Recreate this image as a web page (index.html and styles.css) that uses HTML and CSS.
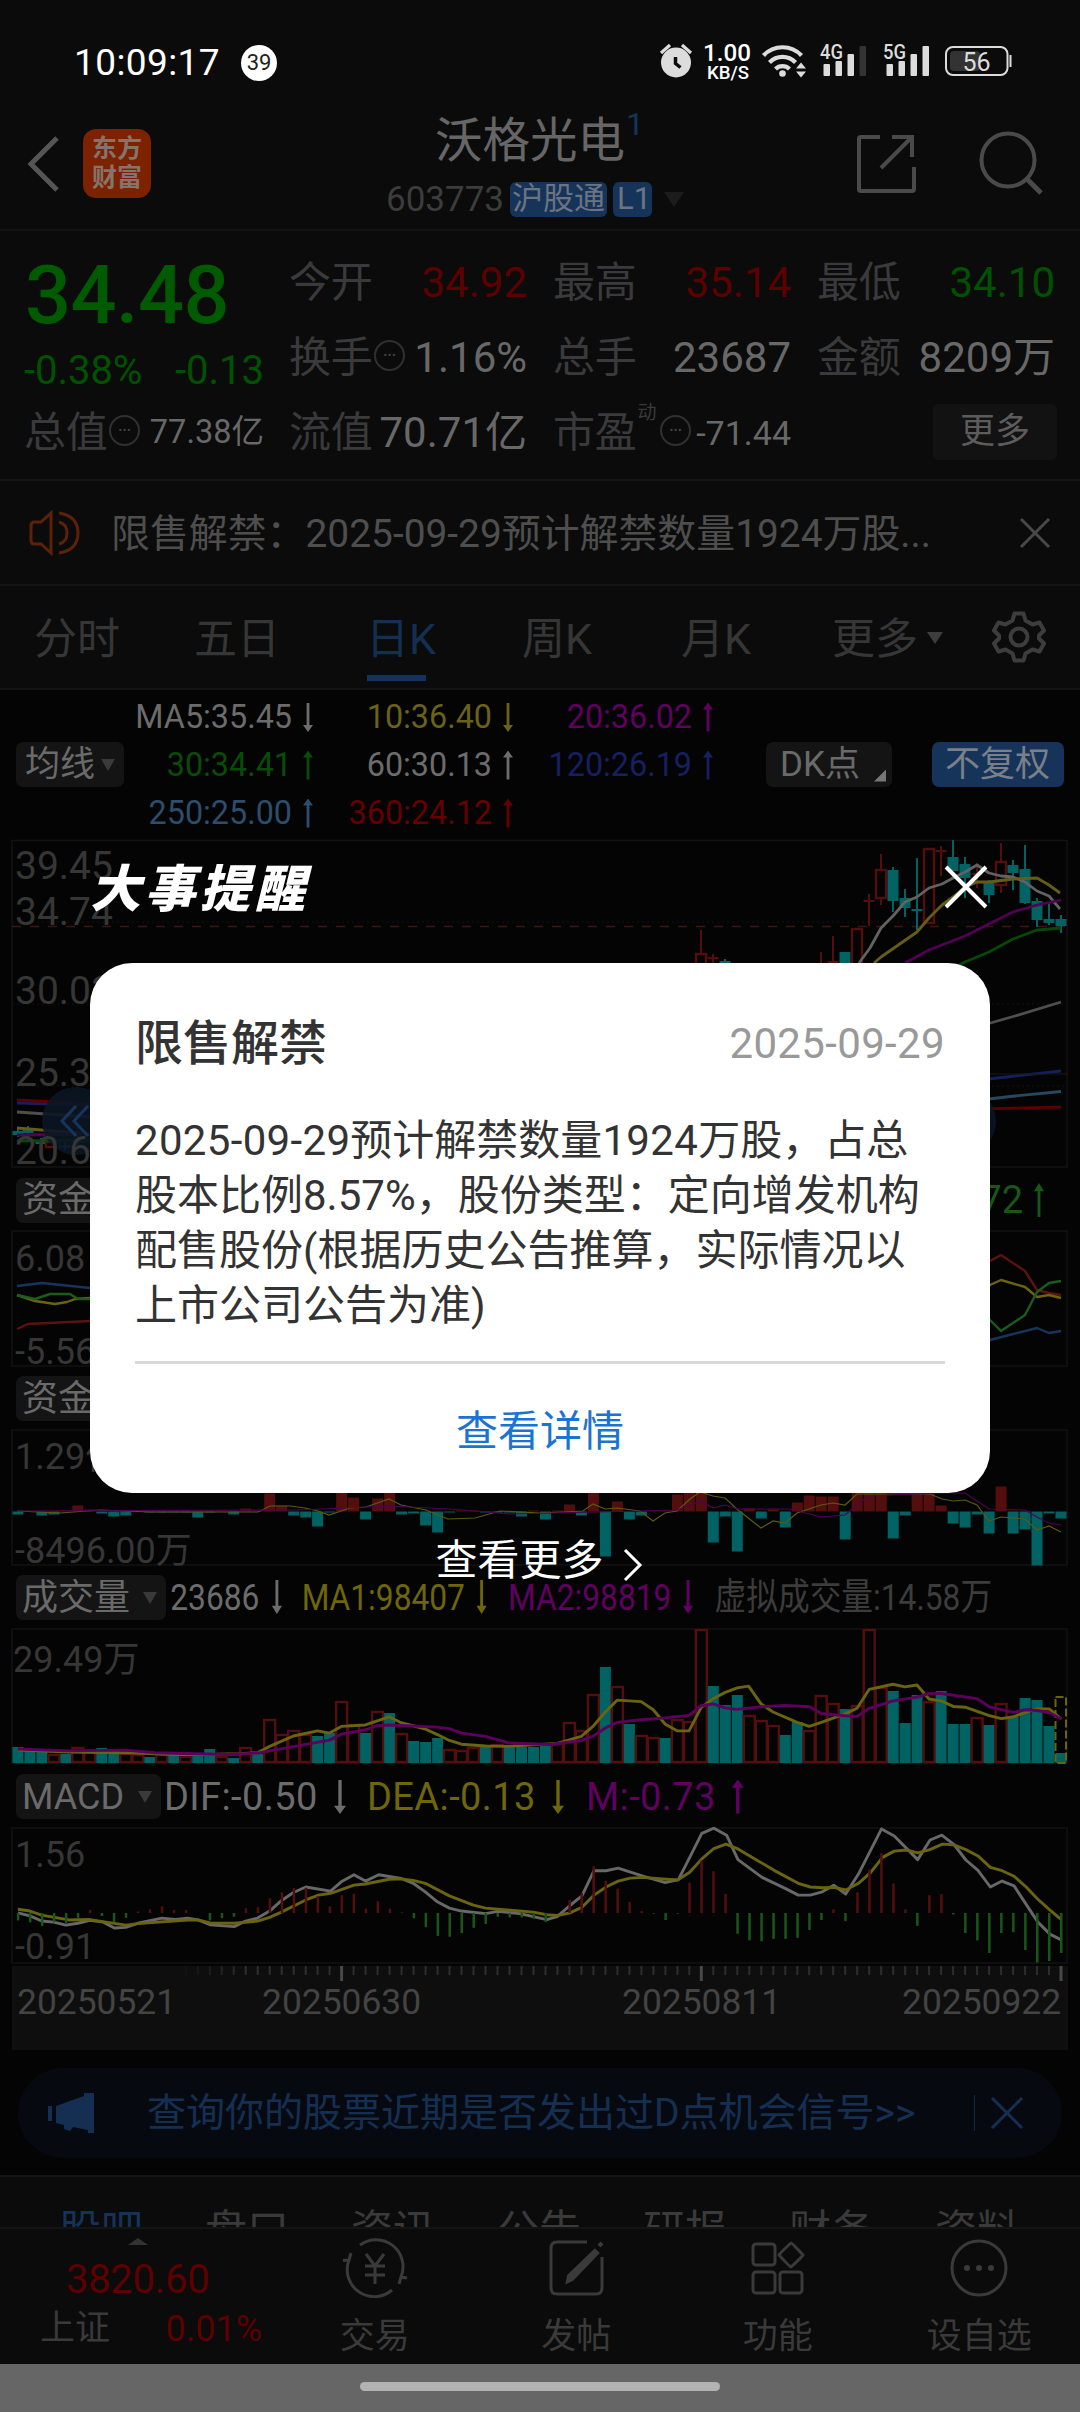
FILE: index.html
```html
<!DOCTYPE html>
<html lang="zh-CN">
<head>
<meta charset="utf-8">
<title>沃格光电 603773</title>
<link rel="stylesheet" href="styles.css">
</head>
<body>
<div class="screen">
  <header class="status">
    <span class="clock">10:09:17</span><span class="count">39</span>
    <svg class="status-icons" width="370" height="60" viewBox="650 34 370 60">
      <g fill="#dcdcdc">
        <circle cx="676" cy="63.500" r="15"/>
        <path d="M661 54l9-8M682 46l9 8" stroke="#dcdcdc" stroke-width="3.200"/>
        <path d="M675.500 58v6.500l5 4" stroke="#0b0b0b" stroke-width="3.500" fill="none"/>
      </g>
      <text x="703" y="62" class="st-speed" textLength="48" lengthAdjust="spacingAndGlyphs">1.00</text>
      <text x="707" y="79.500" class="st-unit" textLength="42" lengthAdjust="spacingAndGlyphs">KB/S</text>
      <g fill="none" stroke="#dcdcdc" stroke-width="4.200">
        <path d="M763.500 56.500a26 26 0 0 1 38 0"/><path d="M769.500 63.500a18 18 0 0 1 26 0"/><path d="M775.500 70a10 10 0 0 1 14 0"/>
      </g>
      <circle cx="782.500" cy="74.500" r="3.300" fill="#dcdcdc"/>
      <path d="M796 69.500l5-6 5 6zM796 72.500l5 6 5-6z" fill="#dcdcdc"/>
      <text x="820" y="60" class="st-net" textLength="23" lengthAdjust="spacingAndGlyphs">4G</text>
      <g fill="#dcdcdc"><rect x="823.500" y="65" width="6.500" height="12" rx="1"/><rect x="835.500" y="62" width="6.500" height="15" rx="1"/><rect x="847.500" y="55" width="6.500" height="22" rx="1"/><rect x="859.500" y="47" width="6.500" height="30" rx="1" fill="#333"/></g>
      <text x="883" y="60" class="st-net" textLength="23" lengthAdjust="spacingAndGlyphs">5G</text>
      <g fill="#dcdcdc"><rect x="886.500" y="65" width="6.500" height="12" rx="1"/><rect x="898.500" y="62" width="6.500" height="15" rx="1"/><rect x="910.500" y="55" width="6.500" height="22" rx="1"/><rect x="922.500" y="47" width="6.500" height="30" rx="1"/></g>
      <rect x="946" y="48" width="61.500" height="28" rx="7" fill="none" stroke="#dcdcdc" stroke-width="2"/>
      <rect x="950" y="52" width="30" height="20" rx="4" fill="#333"/>
      <rect x="1009.500" y="56" width="2" height="12" fill="#dcdcdc"/>
      <text x="962.500" y="71.500" class="st-batt" textLength="28">56</text>
    </svg>
  </header>

  <div class="head">
    <svg class="back" width="36" height="60" viewBox="0 0 36 60"><path d="M32 4L6 30l26 26" fill="none" stroke="#555" stroke-width="5"/></svg>
    <div class="logo">东方<br>财富</div>
    <div class="stock">
      <div class="name">沃格光电<sup>1</sup></div>
      <div class="code">603773<b>沪股通</b><b>L1</b><i></i></div>
    </div>
    <svg class="head-icons" width="200" height="70" viewBox="850 130 200 70" fill="none" stroke="#4a4a4a" stroke-width="4">
      <path d="M881 137H862q-2 0-2 2v50q0 2 2 2h51q2 0 2-2v-22M893 137h20v20M913 137L882 168"/>
      <circle cx="1009" cy="160" r="26.500"/><path d="M1028 179l14 14" stroke-width="5"/>
    </svg>
  </div>

  <section class="quote">
    <div class="q-col first">
      <div class="price">34.48</div>
      <div class="chg"><span>-0.38%</span><span>-0.13</span></div>
      <div class="row"><label>总值</label><i class="dots">•••</i><span class="s33">77.38亿</span></div>
    </div>
    <div class="q-col">
      <div class="row"><label>今开</label><span class="up">34.92</span></div>
      <div class="row"><label>换手</label><i class="dots">•••</i><span>1.16%</span></div>
      <div class="row"><label>流值</label><span>70.71亿</span></div>
    </div>
    <div class="q-col">
      <div class="row"><label>最高</label><span class="up">35.14</span></div>
      <div class="row"><label>总手</label><span>23687</span></div>
      <div class="row"><label>市盈</label><em>动</em><i class="dots">•••</i><span class="s34">-71.44</span></div>
    </div>
    <div class="q-col">
      <div class="row"><label>最低</label><span class="down">34.10</span></div>
      <div class="row"><label>金额</label><span>8209万</span></div>
      <div class="row"><button class="more">更多</button></div>
    </div>
  </section>

  <div class="notice">
    <svg width="52" height="46" viewBox="0 0 52 46" fill="none" stroke="#5c2208" stroke-width="3"><path d="M22 3v40L12 34H5q-3 0-3-4V16q0-4 3-4h7z"/><path d="M30 12q8 2 8 11t-8 11M30 3q19 3 19 20T30 43"/></svg>
    <span>限售解禁：2025-09-29预计解禁数量1924万股...</span>
    <svg width="32" height="32" viewBox="0 0 32 32" stroke="#484848" stroke-width="3"><path d="M2 2l28 28M30 2L2 30"/></svg>
  </div>

  <nav class="tabs">
    <span>分时</span><span>五日</span><span class="on">日K</span><span>周K</span><span>月K</span><span>更多<i></i></span>
    <svg width="54" height="54" viewBox="-27 -27 54 54" fill="none" stroke="#3d3d3d" stroke-width="4" stroke-linejoin="round"><path d="M-4.500-23.500h9l2 7 7 4 7-2 4.500 8-5 5v3l5 5-4.500 8-7-2-7 4-2 7h-9l-2-7-7-4-7 2-4.500-8 5-5v-3l-5-5 4.500-8 7 2 7-4z"/><circle r="8.500"/></svg>
  </nav>

  <section class="ma">
    <div class="chip ma-chip">均线<i></i></div>
    <div class="ma-grid">
      <span class="c-w">MA5:35.45<u class="ar dn"></u></span><span class="c-y">10:36.40<u class="ar dn"></u></span><span class="c-m">20:36.02<u class="ar"></u></span>
      <span class="c-g">30:34.41<u class="ar"></u></span><span class="c-w">60:30.13<u class="ar"></u></span><span class="c-b">120:26.19<u class="ar"></u></span>
      <span class="c-l">250:25.00<u class="ar"></u></span><span class="c-r">360:24.12<u class="ar"></u></span>
    </div>
    <div class="chip dk">DK点<i></i></div>
    <div class="chip fq">不复权</div>
  </section>

  <section class="charts">
    <svg class="c-main" width="1080" height="330" viewBox="0 839 1080 330">
      <path class="frame" d="M12 840.500H1067V1167H12z"/>
      <path class="grid" d="M12 922H1067M12 1004H1067M12 1086H1067"/>
      <g class="axis big"><text x="15" y="878.500">39.45</text><text x="15" y="924.500">34.74</text><text x="15" y="1004">30.03</text><text x="15" y="1086">25.31</text></g>
      <path d="M12 926.500H1067" stroke="#42140f" stroke-width="1.500" stroke-dasharray="9 9"/>
      <g id="candles"></g>
      <g class="line">
        <path stroke="#626262" d="M859 963l11-15 11-20 12-12 12-14 12-5 12-9 13-4 11-6 12-6 12-7 12 8 12 3 12 1 12 5 12 9 12 5 11 13"/>
        <path stroke="#665c1a" d="M874 963l7-6 36-25 12-14 13-13 11-8 12-10 12-5h12l24-3 24-1 12 7 11 8"/>
        <path stroke="#520052" d="M905 963l24-13 36-14 24-12 24-12 24-7 24-5"/>
        <path stroke="#064806" d="M955 967l10-5 24-10 24-13 24-9 24-2"/>
        <path stroke="#4e4e4e" d="M17 1112L90 1117M980 1026l35-10 46-14"/>
        <path stroke="#14205c" d="M17 1103l73 2M980 1080l35-4 46-5"/>
        <path stroke="#27495f" d="M980 1100l35-4 46-4.500"/>
        <path stroke="#5c0000" d="M17 1100l73 4M980 1109l81-2"/>
        <path stroke="#665c1a" d="M17 1128l73 6"/><path stroke="#520052" d="M17 1135l73-1"/><path stroke="#064806" d="M17 1141l73-1"/>
      </g>
      <path d="M990 1074h77" stroke="#191919"/>
      <g opacity=".9"><circle cx="76" cy="1121" r="34" fill="#0b1624"/><circle cx="962" cy="1121" r="34" fill="#0b1624"/></g>
      <path d="M76 1106l-14 15 14 15M88 1106l-14 15 14 15" fill="none" stroke="#17355c" stroke-width="3"/>
      <text class="axis big" x="15" y="1164">20.60</text>
    </svg>
    <div class="strip"><div class="chip">资金<i></i></div><span class="fund">72<u class="ar"></u></span></div>
    <svg width="1080" height="137" viewBox="0 1230 1080 137">
      <path class="frame" d="M12 1231H1067V1366H12z"/>
      <g class="axis"><text x="15" y="1271">6.08</text><text x="15" y="1364">-5.56</text></g>
      <g class="line thin">
        <path stroke="#17355c" d="M17 1286l25-3 48 5M980 1342l10-2 47-12 12 5 12-2"/>
        <path stroke="#5c1212" d="M17 1329l11-5 62-3M980 1266l10-5 11-6 24 16 12 19 12 3 12 2"/>
        <path stroke="#6a6410" d="M17 1295l18 6 20 3 12-2 8-3 15-1M980 1290l10-5 11-5 24 7 12 10 12-2 12 3"/>
        <path stroke="#1c5c1a" d="M17 1295l18 4 15-5h20l8 5h12M980 1310l10 10 11 11 24-16 12-23 12-9 12-2"/>
      </g>
    </svg>
    <div class="strip"><div class="chip">资金<i></i></div></div>
    <svg width="1080" height="137" viewBox="0 1429 1080 137">
      <path class="frame" d="M12 1430H1067V1565H12z"/>
      <g class="axis"><text x="15" y="1469">1.29亿</text><text x="15" y="1562.500">-8496.00万</text></g>
      <g id="flow"></g>
      <g fill="none" stroke-width="1.200">
        <polyline stroke="#5c5a10" points="17,1511 60,1513 100,1510 150,1512 258,1512 270,1506 290,1506 305,1508 318,1511 329,1515 350,1508 366,1507 389,1499 401,1505 426,1510 448,1519 475,1518 500,1511 540,1513 583,1511 593,1504 605,1509 617,1508 640,1511 653,1521 665,1513 677,1511 690,1499 700,1492 713,1496 725,1498 738,1510 761,1528 773,1521 785,1523 797,1513 821,1505 833,1503 845,1505 857,1494 930,1494 942,1499 953,1501 965,1500 977,1505 989,1521 1001,1517 1025,1519 1037,1530 1049,1526 1061,1532"/>
        <polyline stroke="#520052" points="17,1511 300,1510 389,1506 450,1509 510,1514 640,1511 677,1510 701,1501 713,1508 725,1505 738,1509 790,1509 821,1517 845,1515 857,1505 869,1496 940,1493 965,1493 977,1501 989,1509 1025,1510 1037,1517 1049,1523 1061,1525"/>
      </g>
    </svg>
    <div class="strip"><div class="chip wide">成交量<i></i></div>
      <div class="vals narrow"><span class="c-w">23686<u class="ar dn"></u></span><span class="c-y2">MA1:98407<u class="ar dn"></u></span><span class="c-m">MA2:98819<u class="ar dn"></u></span><span class="c-d">虚拟成交量:14.58万</span></div></div>
    <svg width="1080" height="137" viewBox="0 1628 1080 137">
      <path class="frame" d="M12 1629H1067V1763.500H12z"/>
      <g class="axis"><text x="13" y="1672">29.49万</text></g>
      <g id="volume"></g>
      <g class="line scaled" transform="translate(0 1480) scale(.34435 .37)">
        <polyline stroke="#6a6410" points="52,730 200,735 400,738 500,742 590,742 700,740 748,737 783,720 852,692 922,678 957,684 991,666 1061,662 1130,640 1165,656 1235,673 1270,688 1305,704 1340,714 1410,719 1480,720 1548,716 1618,712 1688,693 1723,665 1757,628 1792,595 1862,599 1897,621 1932,660 1966,678 2001,678 2036,615 2071,591 2106,574 2141,562 2174,557 2210,605 2245,627 2315,655 2350,666 2385,655 2454,632 2489,617 2524,566 2593,552 2628,559 2663,554 2698,592 2733,597 2768,612 2803,614 2873,637 2908,645 2943,640 2978,628 3013,618 3048,619 3082,646"/>
        <polyline stroke="#5c005c" points="52,727 200,732 365,730 450,737 660,742 748,738 783,732 957,703 991,687 1061,675 1095,664 1130,662 1270,668 1305,672 1340,684 1410,693 1480,711 1600,715 1688,704 1723,692 1757,671 1792,655 1862,648 1932,643 2001,636 2036,610 2071,605 2106,616 2141,620 2210,613 2280,609 2350,613 2385,631 2454,637 2489,639 2524,617 2593,597 2663,587 2698,577 2733,577 2838,591 2873,613 2943,628 2978,621 3013,623 3048,629 3082,646"/>
      </g>
    </svg>
    <div class="strip"><div class="chip macd">MACD<i></i></div>
      <div class="vals wide-vals"><span class="c-w">DIF:-0.50<u class="ar dn"></u></span><span class="c-y2">DEA:-0.13<u class="ar dn"></u></span><span class="c-m">M:-0.73<u class="ar"></u></span></div></div>
    <svg width="1080" height="137" viewBox="0 1827 1080 137">
      <path class="frame" d="M12 1828H1067V1963H12z"/>
      <g class="axis"><text x="15" y="1866.500">1.56</text><text x="15" y="1958.500">-0.91</text></g>
      <g class="line scaled" transform="translate(0 1480) scale(.34435 .37)">
        <polyline stroke="#686868" points="52,1170 87,1178 121,1192 156,1195 191,1203 226,1198 261,1190 300,1195 332,1211 365,1209 400,1198 470,1184 510,1188 545,1184 575,1189 610,1202 680,1207 713,1192 748,1184 783,1165 817,1137 852,1115 888,1100 960,1111 991,1086 1028,1067 1061,1084 1100,1067 1165,1077 1200,1090 1235,1113 1270,1140 1305,1157 1340,1165 1410,1172 1445,1166 1510,1172 1568,1184 1588,1188 1618,1180 1655,1150 1690,1124 1725,1056 1760,1056 1795,1049 1865,1070 1932,1088 1970,1080 2003,1020 2038,955 2073,941 2110,960 2143,1026 2213,1074 2283,1105 2318,1122 2353,1122 2388,1113 2421,1095 2456,1119 2493,1065 2560,943 2597,962 2665,1026 2701,973 2735,960 2770,985 2805,1027 2840,1055 2876,1100 2910,1084 2945,1097 2980,1147 3014,1195 3050,1228 3082,1243"/>
        <polyline stroke="#6a6410" points="52,1160 87,1165 121,1176 200,1189 261,1188 365,1203 400,1199 545,1189 575,1189 610,1197 680,1198 748,1192 783,1182 817,1168 888,1135 925,1122 960,1117 1028,1095 1061,1092 1130,1079 1165,1078 1200,1082 1235,1090 1305,1124 1375,1149 1410,1157 1548,1168 1588,1175 1618,1177 1655,1170 1690,1155 1725,1122 1760,1100 1795,1084 1830,1076 1865,1074 1935,1079 1968,1081 2003,1060 2038,1024 2073,996 2108,984 2143,997 2248,1055 2318,1090 2353,1100 2388,1102 2421,1101 2456,1108 2493,1090 2528,1061 2563,1020 2597,1003 2632,1000 2665,1008 2700,999 2737,984 2770,986 2805,999 2840,1016 2876,1047 2910,1056 2945,1071 2980,1100 3014,1133 3050,1163 3082,1188"/>
      </g>
      <g id="macd"></g>
    </svg>
    <svg class="timeline" width="1080" height="86" viewBox="0 1964 1080 86">
      <rect x="12" y="1966" width="1056" height="84" fill="#0e0e0e"/>
      <g id="ticks"></g>
      <g class="dates"><text x="17" y="2013.500">20250521</text><text x="262" y="2013.500">20250630</text><text x="622" y="2013.500">20250811</text><text x="902" y="2013.500">20250922</text></g>
    </svg>
  </section>

  <div class="banner">
    <svg width="46" height="40" viewBox="0 0 46 40" fill="#152f52"><path d="M0 13h4v15H0zM8 13L36 3V0h10v40h-6v-3l-15-3-3 4-6-2v-4l-8-2zM40 0h6v40h-6z"/></svg>
    <span>查询你的股票近期是否发出过D点机会信号&gt;&gt;</span>
    <i></i>
    <svg width="34" height="34" viewBox="0 0 34 34" stroke="#152f52" stroke-width="3"><path d="M2 2l30 30M32 2L2 32"/></svg>
  </div>

  <nav class="subtabs"><span class="on">股吧</span><span>盘口</span><span>资讯</span><span>公告</span><span>研报</span><span>财务</span><span>资料</span></nav>

  <footer class="bottom">
    <div class="index"><i></i><strong>3820.60</strong><div><span>上证</span><b>0.01%</b></div></div>
    <div class="item"><svg width="66" height="60" viewBox="-33 -30 66 60" fill="none" stroke="#3a3a3a" stroke-width="3"><path d="M-15-23A27 27 0 0 1 26 9L32 10M26 9L24 16M17 22A27 27 0 0 1-26-8L-32-7.500M-26-8L-24-15"/><path d="M-9-14L0-2 9-14M0-2V16M-10-2h20M-10 7h20"/></svg><span>交易</span></div>
    <div class="item"><svg width="60" height="60" viewBox="-30 -30 60 60" fill="none" stroke="#3a3a3a" stroke-width="3"><path d="M11-26H-19q-6 0-6 6V20q0 6 6 6H20q6 0 6-6V-11"/><path d="M19-17L-7 8l-1 5 4-2L21-15zM23-22l3-3" stroke-width="4" fill="#3a3a3a"/></svg><span>发帖</span></div>
    <div class="item"><svg width="60" height="60" viewBox="-30 -30 60 60" fill="none" stroke="#3a3a3a" stroke-width="3"><rect x="-25" y="-24" width="22" height="21" rx="3"/><rect x="-25" y="4" width="22" height="21" rx="3"/><rect x="2" y="4" width="22" height="21" rx="3"/><path d="M13-25q1 0 12 12q-1 2-12 12q-1 0-12-12q1-2 12-12z" stroke-linejoin="round"/></svg><span>功能</span></div>
    <div class="item"><svg width="60" height="60" viewBox="-30 -30 60 60"><circle r="27" fill="none" stroke="#3a3a3a" stroke-width="3"/><g fill="#3a3a3a"><circle cx="-12" r="3"/><circle r="3"/><circle cx="12" r="3"/></g></svg><span>设自选</span></div>
  </footer>
  <div class="gesture"><i></i></div>

  <div class="modal">
    <div class="modal-head"><h1>大事提醒</h1><svg width="44" height="44" viewBox="0 0 44 44" stroke="#fff" stroke-width="4"><path d="M2 2l40 40M42 2L2 42"/></svg></div>
    <div class="card">
      <div class="card-head"><h2>限售解禁</h2><time>2025-09-29</time></div>
      <p><span class="num">2025-09-29</span>预计解禁数量<span class="num">1924</span>万股，占总<br>股本比例8.57%，股份类型：定向增发机构<br>配售股份(根据历史公告推算，实际情况以<br>上市公司公告为准)</p>
      <a class="detail">查看详情</a>
    </div>
    <div class="see-more">查看更多<svg width="20" height="34" viewBox="0 0 20 34" fill="none" stroke="#fff" stroke-width="3"><path d="M2 2l15 15L2 32"/></svg></div>
  </div>
</div>
<script src="charts.js"></script>
</body>
</html>
```
FILE: styles.css
```css
* { box-sizing: border-box; }
body { margin: 0; background: #040404; font-family: Roboto, "Noto Sans CJK SC", sans-serif; color: #666; }
i, em { font-style: normal; }
svg { display: block; flex: none; }
.screen { position: relative; width: 1080px; height: 2412px; overflow: hidden; line-height: 1; display: flex; flex-direction: column; }
.screen > * { flex: none; }

.status { height: 104px; background: #0b0b0b; display: flex; align-items: center; padding: 21px 60px 0 74px; color: #fff; }
.clock { font-size: 37px; letter-spacing: .4px; width: 167px; }
.count { width: 36px; height: 36px; border-radius: 50%; background: #fff; color: #222; font-size: 22px; display: flex; align-items: center; justify-content: center; }
.status-icons { margin-left: auto; margin-top: 1px; }
.st-speed { font-size: 24px; font-weight: 500; fill: #fff; }
.st-unit { font-size: 19px; font-weight: 500; fill: #fff; }
.st-net { font-size: 20px; font-weight: 500; fill: #dcdcdc; }
.st-batt { font-size: 25px; fill: #dcdcdc; }

.head { height: 127px; background: #0b0b0b; border-bottom: 2px solid #141414; display: flex; padding: 0 31px 0 25px; }
.back { margin: 30px 22px 0 0; }
.logo { width: 68px; height: 69px; margin-top: 25px; border-radius: 13px; background: #7c2200; color: #85736c; font-size: 25px; line-height: 29px; font-weight: 700; text-align: center; padding-top: 5px; }
.stock { flex: 1; padding: 10px 0 0 284px; }
.name { font-size: 47.500px; line-height: 54px; width: 220px; display: flex; }
.name sup { font-size: 32px; line-height: 32px; color: #14345c; margin: -6px 0 0 1px; }
.code { display: flex; align-items: center; font-size: 35px; color: #3c3c3c; height: 36px; margin: 13px 0 0 -49px; width: 310px; }
.code b { font-weight: 400; font-size: 31px; background: #16335a; color: #6b7480; height: 35px; line-height: 34px; border-radius: 6px; padding: 0 2px; margin-left: 6px; }
.code b + b { padding: 0 4px; width: 39px; }
.code i { border: 10px solid transparent; border-top: 15px solid #1c1c1c; border-bottom: 0; margin-left: 12px; }
.head-icons { margin: 26px 0 0; }

.quote { height: 250px; background: #0b0b0b; border-bottom: 2px solid #141414; display: flex; gap: 26px; padding: 14px 24px 0 24px; font-size: 42px; }
.q-col { width: 238px; }
.q-col:not(.first) { position: relative; left: -1px; }
.q-col.first { width: 240px; }
.row { display: flex; align-items: center; height: 75px; white-space: nowrap; }
.row label { color: #3a3a3c; letter-spacing: -.3px; }
.row span { margin-left: auto; color: #686868; }
.row .s33 { font-size: 32.500px; }
.row .s34 { font-size: 34px; }
.row .up { color: #5c0000; }
.row .down { color: #005200; }
.row em { font-size: 19px; color: #3a3a3c; margin: -40px 2px 0 1px; }
.dots { width: 31px; height: 31px; border: 2px solid #303030; border-radius: 50%; font-size: 11px; letter-spacing: .5px; color: #424242; display: flex; align-items: center; justify-content: center; margin: -4px 0 0 2px; flex: none; }
.price { font-size: 81px; font-weight: 500; color: #005a00; height: 101px; line-height: 101px; padding-left: 1px; letter-spacing: -.5px; }
.chg { display: flex; justify-content: space-between; font-size: 40px; color: #005200; height: 49px; line-height: 49px; }
.more { margin: 0 -2px 0 auto; width: 124px; height: 56px; border: 0; border-radius: 6px; background: #121212; color: #5c5c5c; font: inherit; font-size: 35px; padding: 0; margin-top: -2px; }

.notice { height: 105px; background: #0b0b0b; border-bottom: 2px solid #141414; display: flex; align-items: center; padding: 0 29px; font-size: 38.900px; color: #4e4e4e; }
.notice span { margin: 3px 0 0 30px; flex: 1; white-space: nowrap; }

.tabs { height: 104px; background: #0b0b0b; border-bottom: 2px solid #141414; display: flex; align-items: center; padding: 0 0 0 34px; font-size: 43px; color: #363636; }
.tabs span { width: 160px; height: 102px; line-height: 106px; white-space: nowrap; }
.tabs span:nth-child(3) { width: 156px; margin-left: 12px; }
.tabs span:nth-child(4) { width: 159px; }
.tabs span:nth-child(5) { width: 151px; }
.tabs .on { color: #152f52; background: linear-gradient(#15335a, #15335a) 1px 89px / 59px 6px no-repeat; }
.tabs i { display: inline-block; border: 8px solid transparent; border-top: 12px solid #3d3d3d; border-bottom: 0; margin: 0 0 10px 9px; }

.ma { height: 149px; display: flex; align-items: center; padding-left: 16px; font-size: 32.300px; }
.chip { height: 45px; border-radius: 7px; background: #141414; color: #6a6a6a; font-size: 36px; line-height: 44px; padding-left: 6px; display: flex; align-items: center; flex: none; white-space: nowrap; width: 150px; }
.chip i { border: 7px solid transparent; border-top: 12px solid #3a3a3a; border-bottom: 0; margin-left: auto; margin-right: 9px; }
.ma-chip { width: 108px; font-size: 35px; padding-left: 9px; }
.ma-grid { display: grid; grid-template-columns: 189px 200px 200px; grid-auto-rows: 48px; width: 590px; align-self: flex-start; padding-top: 3px; }
.ma-grid span { display: flex; align-items: center; justify-content: flex-end; }
.ar { display: block; width: 10px; height: 29px; margin-left: 11px; background: currentColor; clip-path: polygon(50% 0, 100% 24%, 64% 24%, 64% 100%, 36% 100%, 36% 24%, 0 24%); text-decoration: none; flex: none; }
.ar.dn { transform: rotate(180deg); }
.c-w { color: #6c6c6c; } .c-y { color: #6a6218; } .c-y2 { color: #6e6608; } .c-m { color: #600060; } .c-g { color: #084c08; }
.c-b { color: #162060; } .c-l { color: #2c4e6c; } .c-r { color: #660000; } .c-d { color: #3c3c3c; }
.dk { width: 126px; margin-left: 52px; padding-left: 14px; font-size: 35px; }
.dk i { border: 0; width: 12px; height: 12px; background: #777; clip-path: polygon(100% 0, 100% 100%, 0 100%); margin: 22px 6px 0 auto; }
.fq { width: 132px; margin-left: 40px; background: #16335a; color: #7a7f88; font-size: 35px; padding-left: 13px; }

.charts { height: 1211px; }
.strip { height: 62px; display: flex; align-items: center; padding: 1px 0 0 16px; }
.c-main + .strip { height: 61px; }
.strip .chip.macd { width: 145px; }
.fund { margin-left: auto; padding-right: 36px; font-size: 38px; color: #1a5618; display: flex; align-items: center; }
.strip .ar { height: 34px; }
.vals { display: flex; align-items: center; font-size: 38px; white-space: nowrap; padding-left: 3px; }
.vals span { display: flex; align-items: center; width: 203px; }
.vals .ar { margin-left: 16px; width: 12px; }
.vals span:nth-child(2) { width: 219px; }
.wide-vals { letter-spacing: .4px; }
.narrow { font-size: 37.200px; transform: scaleX(.853); transform-origin: 0 50%; padding-left: 5px; }
.narrow span:first-child { width: 154px; }
.narrow span:nth-child(2), .narrow span:nth-child(3) { width: 242px; }
.narrow .ar { width: 12px; margin-left: 14px; }
.frame { fill: none; stroke: #121212; stroke-width: 1.500; }
.grid { stroke: #131313; stroke-dasharray: 2 3; }
.axis { font-size: 36px; fill: #363636; }
.axis.big { font-size: 39px; }
.dates { font-size: 35.400px; fill: #444; }
.line { fill: none; stroke-width: 2.800; stroke-linejoin: round; }
.line.thin { stroke-width: 2.400; }
.scaled polyline { vector-effect: non-scaling-stroke; stroke-width: 2.900; }

.banner { margin: 18px 18px 17px; height: 90px; border-radius: 45px; background: #060a10; display: flex; align-items: center; padding-left: 30px; font-size: 39px; color: #152f52; }
.banner span { margin-left: 53px; width: 827px; white-space: nowrap; }
.banner i { width: 1px; height: 36px; background: #14283f; margin-right: 15px; }

.subtabs { height: 54px; border-top: 2px solid #141414; border-bottom: 2px solid #141414; background: #0b0b0b; overflow: hidden; display: grid; grid-template-columns: repeat(7, 146px); padding: 29px 0 0 28px; text-align: center; font-size: 42px; line-height: 50px; color: #3a3a3a; }
.subtabs .on { color: #15335a; }

.bottom { height: 135px; background: #0b0b0b; display: flex; color: #3a3a3a; font-size: 35px; }
.index { width: 274px; padding-left: 40px; }
.index i { display: block; width: 0; border: 10px solid transparent; border-bottom: 7px solid #333; border-top: 0; margin: 9px 0 0 88px; }
.index strong { display: block; font-weight: 400; font-size: 40px; letter-spacing: -.3px; color: #5c0000; margin: 15px 0 11px 26px; line-height: 40px; }
.index div { display: flex; line-height: 36px; width: 222px; justify-content: space-between; }
.index b { font-weight: 400; color: #5c0000; font-size: 36px; }
.item { width: 201.500px; display: flex; flex-direction: column; align-items: center; padding-top: 9px; }
.item span { margin-top: 21px; }
.gesture { height: 48px; background: #666; display: flex; justify-content: center; padding-top: 18px; }
.gesture i { width: 360px; height: 9px; border-radius: 5px; background: #b3b3b3; }

.modal { position: absolute; left: 90px; top: 860px; width: 900px; color: #333; }
.modal-head { height: 103px; display: flex; justify-content: space-between; padding: 5px 2px 0 0; color: #fff; }
.modal h1 { margin: 0; font-size: 50.500px; line-height: 50px; font-weight: 900; font-style: italic; letter-spacing: 4.300px; }
.card { height: 530px; border-radius: 42px; background: #fff; padding: 51px 45px 0; }
.card-head { display: flex; justify-content: space-between; align-items: center; height: 60px; }
.card h2 { margin: 0; font-size: 48px; font-weight: 500; }
.card time { font-size: 42px; color: #999; letter-spacing: .35px; }
.card p { margin: 38px 0 0; font-size: 42px; line-height: 55px; height: 252px; border-bottom: 3px solid #d8d8d8; white-space: nowrap; padding-top: 1px; }
.num { letter-spacing: .33px; }
.detail { display: block; text-align: center; font-size: 42px; line-height: 50px; margin-top: 43px; color: #1a74d2; }
.see-more { display: flex; align-items: center; justify-content: center; font-size: 42px; color: #fff; margin-top: 48px; height: 40px; padding-right: 2px; }
.see-more svg { margin: 8px 0 0 19px; }
```
FILE: charts.js
```js
const STEP = 11.99;
const X0 = 17.9;
const RED = '#540e0e';
const TEAL = '#006262';
const GREEN = '#1a561a';
const cx = i => X0 + STEP * i;
const rect = (x, y, w, h, fill) => `<rect x="${x.toFixed(1)}" y="${y.toFixed(1)}" width="${w}" height="${h.toFixed(1)}" fill="${fill}"/>`;
const box = (x, y, w, h) => `<rect x="${x.toFixed(1)}" y="${y.toFixed(1)}" width="${w}" height="${h.toFixed(1)}" fill="#040404" stroke="${RED}" stroke-width="2.4"/>`;
const put = (id, html) => { document.getElementById(id).innerHTML = html; };

// x, wick top, wick bottom, body top, body bottom, kind (h: hollow, r: red, t: teal)
const candles = [
  [701, 930, 965, 954, 990, 'h'], [713, 954, 965, 957, 959, 'r'], [725, 959, 970, 961, 975, 't'],
  [821, 952, 975, 972, 974, 'r'], [833, 936, 975, 961, 964, 'r'], [845, 952, 975, 952, 975, 't'],
  [857, 929, 975, 929, 975, 'h'], [869, 894, 926, 900, 902, 'r'], [881, 854, 905, 870, 898, 'h'],
  [893, 867, 912, 870, 901, 't'], [905, 889, 917, 898, 908, 't'], [917, 858, 930, 909, 911, 't'],
  [929, 849, 923, 849, 923, 'h'], [941, 846, 876, 850, 852, 'r'], [953, 840, 871, 857, 871, 't'],
  [965, 857, 898, 864, 878, 't'], [977, 863, 888, 873, 875, 'r'], [989, 880, 903, 882, 895, 't'],
  [1001, 843, 893, 862, 885, 'h'], [1013, 860, 890, 865, 873, 't'], [1025, 845, 904, 869, 903, 't'],
  [1037, 898, 927, 901, 920, 't'], [1049, 902, 925, 919, 923, 't'], [1061, 915, 933, 919, 926, 't'],
  [18, 1128, 1137, 1131, 1135, 't'], [28, 1126, 1140, 1130, 1133, 't'], [41, 1138, 1146, 1141, 1144, 't'],
  [51, 1141, 1147, 1142, 1147, 'h'], [65, 1142, 1151, 1145, 1148, 't'], [78, 1136, 1147, 1139, 1143, 't']
];
put('candles', candles.map(([x, a, b, c, d, k]) => {
  const color = k === 't' ? TEAL : RED;
  return rect(x - 1, a, 2, b - a, color) + (k === 'h' ? box(x - 5, c, 10, d - c) : rect(x - 5.5, c, 11, d - c, color));
}).join(''));

const flow = [-3,0,-4,-3,1,6,2,-2,-5,-4,1,-1,-1,-1,-1,-6,-1,1,-3,3,1,18,6,-4,-6,-15,-1,27,14,-8,13,19,-3,-2,-14,-21,-1,1,1,-1,-1,-1,-5,1,
  -8,1,7,-4,20,-45,10,-8,-4,0,1,17,22,24,-31,-5,-40,3,-7,2,-16,9,16,15,15,-28,24,22,24,-27,-4,22,22,6,-12,-16,-3,-22,25,-22,-18,-54,-2,-7];
put('flow', flow.map((v, i) => rect(cx(i) - 5.5, v > 0 ? 1511.5 - v : 1511.5, 11, Math.abs(v), v > 0 ? RED : TEAL)).join(''));

const volume = 't16 t12 t12 r9 t9 r16 r12 t15 t12 r10 r9 t6 r9 t8 r7 t9 t14 r7 t5 r16 t9 r44 r29 r33 r29 t27 t30 r62 r39 t30 r52 t50 r30 t22 t21 t25 r14 r13 r16 t16 r19 t16 t16 t16 t17 r20 r41 r33 r69 t96 r77 t39 r28 r26 t25 r44 r42 r134 t77 t58 t68 r48 r43 r38 t28 t41 r33 r68 r60 t54 r58 r134 r76 t72 t40 t68 r62 t72 t39 t39 r46 t38 r60 t46 t65 t63 t37 t10'.split(' ');
put('volume', volume.map((s, i) => {
  const h = +s.slice(1);
  return s[0] === 't' ? rect(cx(i) - 5.5, 1763 - h, 11, h, TEAL) : box(cx(i) - 5.5, 1764 - h, 11, h - 2);
}).join('') + '<rect x="1055.5" y="1697" width="10.5" height="66" fill="none" stroke="#6a6410" stroke-width="2" stroke-dasharray="8 3"/>');

const macd = [-20,-25,-35,-25,-27,-13,8,-8,-25,-13,4,10,18,8,8,0,-20,-14,-10,13,16,40,56,68,68,45,18,48,52,12,32,12,2,-14,-38,-62,-64,-54,-40,-30,-10,-12,-12,-15,
  -24,0,35,54,126,87,66,30,5,-2,-19,-2,82,142,113,52,-56,-74,-76,-70,-70,-67,-46,-19,10,-22,56,118,162,80,10,-35,48,51,-4,-54,-74,-108,-54,-52,-100,-134,-130,-108];
put('macd', macd.map((v, i) => {
  const h = Math.abs(v) * 0.37;
  return rect(cx(i) - 1, v > 0 ? 1913 - h : 1913, 2.5, h, v > 0 ? RED : GREEN);
}).join(''));

let ticks = '';
for (let i = 14; i < 88; i++) {
  const major = i % 30 === 27;
  const fade = Math.min(1, (i - 13) / 6);
  ticks += `<rect x="${(cx(i) - (major ? 1.5 : 1)).toFixed(1)}" y="1966" width="${major ? 3 : 2}" height="${major ? 15 : 9}" fill="${major ? '#484848' : '#2e2e2e'}" opacity="${fade.toFixed(2)}"/>`;
}
put('ticks', ticks);
```
